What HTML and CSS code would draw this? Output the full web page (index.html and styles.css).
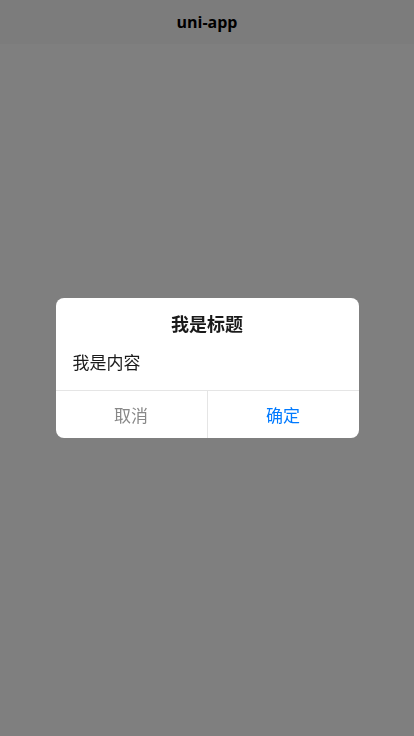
FILE: index.html
```html
<!DOCTYPE html>
<html lang="zh-CN">
<head>
<meta charset="utf-8">
<meta name="viewport" content="width=device-width, initial-scale=1">
<title>uni-app</title>
<link rel="stylesheet" href="styles.css">
</head>
<body>
<header class="navbar"><span class="navbar-title">uni-app</span></header>
<main class="page"></main>
<div class="mask">
  <div class="modal">
    <div class="modal-hd">我是标题</div>
    <div class="modal-bd">我是内容</div>
    <div class="modal-ft">
      <div class="btn btn-cancel">取消</div>
      <div class="btn btn-confirm">确定</div>
    </div>
  </div>
</div>
</body>
</html>
```

FILE: styles.css
```css
html, body {
  margin: 0;
  padding: 0;
  height: 100%;
  background: #ffffff;
  font-family: "Noto Sans", "Noto Sans CJK SC", sans-serif;
}

.navbar {
  height: 44px;
  background: #f8f8f8;
  display: flex;
  align-items: center;
  justify-content: center;
}

.navbar-title {
  font-size: 16px;
  font-weight: 700;
  color: #000000;
  font-family: "Open Sans", "Noto Sans CJK SC", sans-serif;
}

.page {
  height: 692px;
}

.mask {
  position: fixed;
  inset: 0;
  background: rgba(0, 0, 0, 0.5);
  display: flex;
  align-items: center;
  justify-content: center;
}

.modal {
  width: 303px;
  background: #ffffff;
  border-radius: 8px;
  overflow: hidden;
  font-family: "Noto Sans CJK SC", sans-serif;
}

.modal-hd {
  height: 52px;
  padding-bottom: 2px;
  box-sizing: border-box;
  display: flex;
  align-items: center;
  justify-content: center;
  font-size: 18px;
  font-weight: 700;
  color: #1a1a1a;
}

.modal-bd {
  height: 40px;
  padding: 0 17px 17px;
  box-sizing: border-box;
  display: flex;
  align-items: center;
  font-size: 17px;
  color: #1a1a1a;
}

.modal-ft {
  display: flex;
  border-top: 1px solid #e5e5e5;
  height: 47px;
}

.btn {
  flex: 1;
  display: flex;
  align-items: center;
  justify-content: center;
  font-size: 17px;
}

.btn-cancel {
  color: #888888;
  border-right: 1px solid #e5e5e5;
}

.btn-confirm {
  color: #007aff;
}
```
